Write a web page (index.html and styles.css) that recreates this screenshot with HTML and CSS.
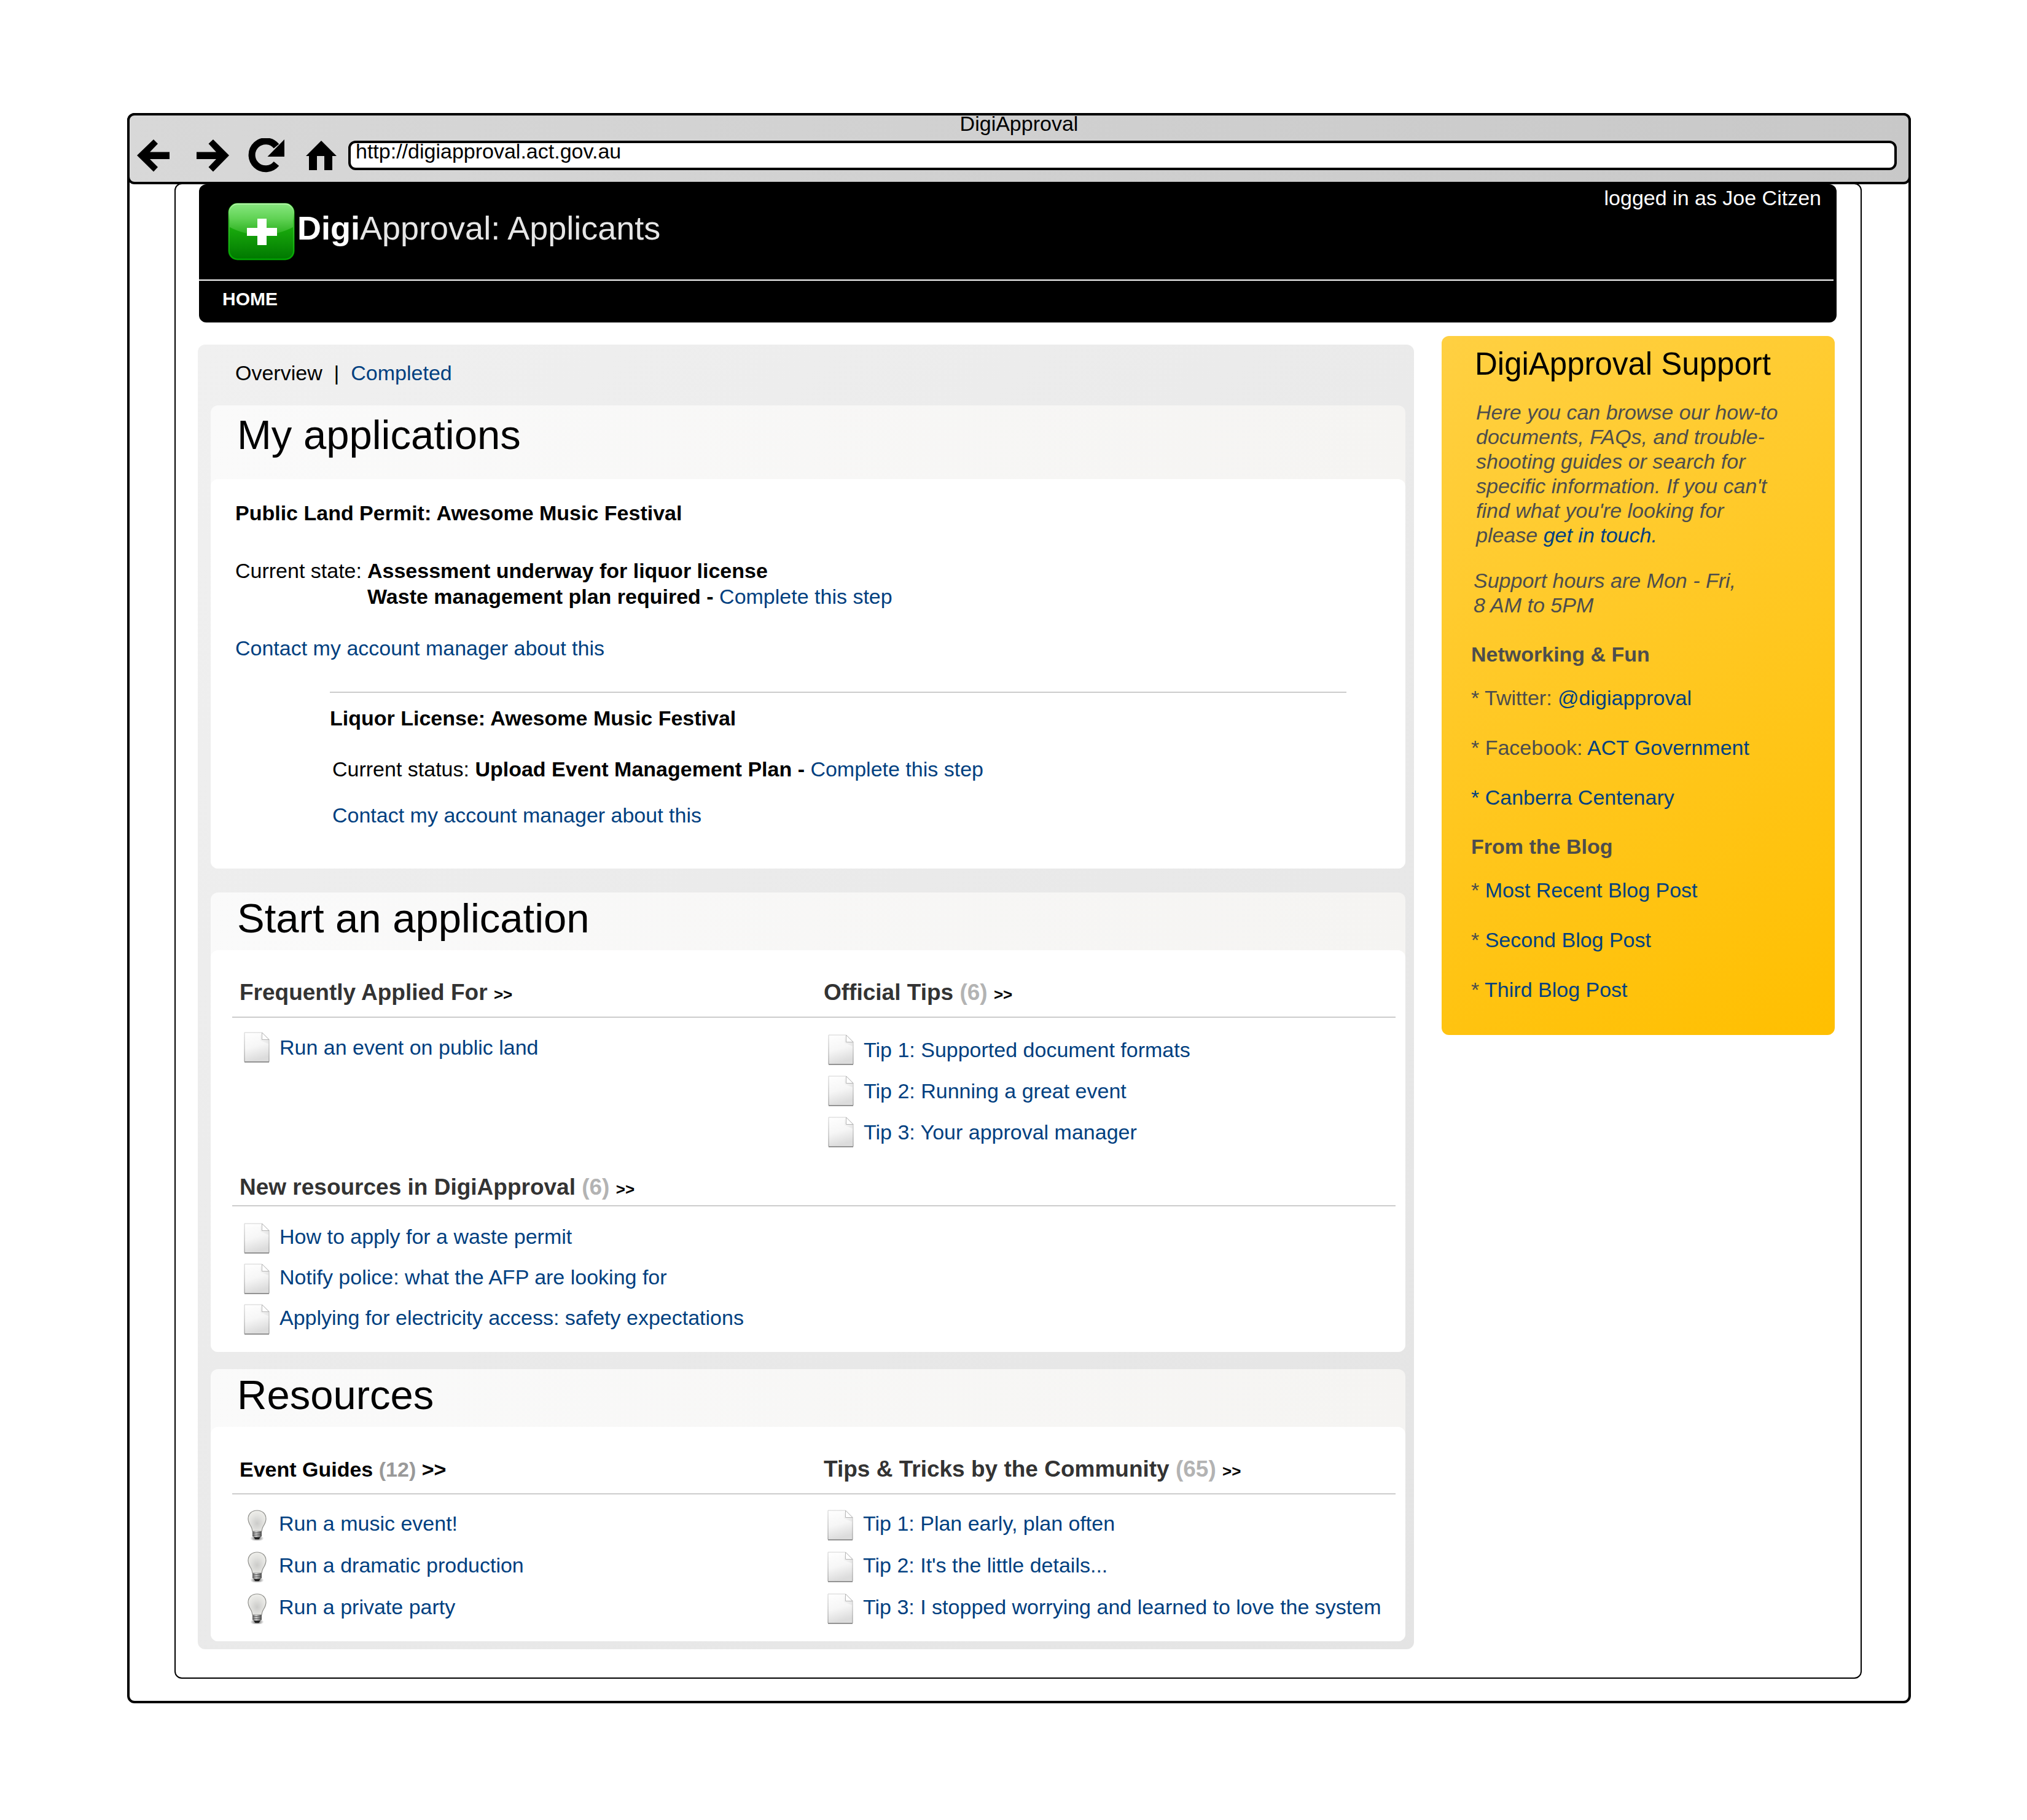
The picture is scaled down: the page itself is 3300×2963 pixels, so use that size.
FILE: index.html
```html
<!DOCTYPE html>
<html lang="en">
<head>
<meta charset="utf-8">
<title>DigiApproval</title>
<link rel="stylesheet" href="styles.css">
</head>
<body>
<svg class="defs" aria-hidden="true">
  <defs>
    <linearGradient id="paper" x1="0" y1="0" x2="0.25" y2="1">
      <stop offset="0" stop-color="#fff"/>
      <stop offset="0.55" stop-color="#f6f6f6"/>
      <stop offset="1" stop-color="#dcdcdc"/>
    </linearGradient>
    <linearGradient id="paper-edge" x1="0" y1="0" x2="0" y2="1">
      <stop offset="0" stop-color="#d2d2d2"/>
      <stop offset="1" stop-color="#8c8c8c"/>
    </linearGradient>
    <linearGradient id="fold-shade" x1="1" y1="0" x2="0" y2="1">
      <stop offset="0" stop-color="#b4b4b4"/>
      <stop offset="1" stop-color="#e8e8e8" stop-opacity="0.3"/>
    </linearGradient>
    <radialGradient id="glass" cx="0.5" cy="0.62" r="0.6">
      <stop offset="0" stop-color="#cbcbc9"/>
      <stop offset="0.6" stop-color="#e2e2df"/>
      <stop offset="1" stop-color="#eeeeea"/>
    </radialGradient>
    <linearGradient id="cap" x1="0" y1="0" x2="1" y2="0">
      <stop offset="0" stop-color="#5e5e5e"/>
      <stop offset="0.4" stop-color="#d6d6d6"/>
      <stop offset="1" stop-color="#4c4c4c"/>
    </linearGradient>
    <radialGradient id="bulb-shadow">
      <stop offset="0" stop-color="#000" stop-opacity="0.7"/>
      <stop offset="1" stop-color="#000" stop-opacity="0"/>
    </radialGradient>
    <symbol id="doc" viewBox="0 0 42 50">
      <path d="M1 1H29.500L41 12.500V48.500H1Z" fill="url(#paper)" stroke="url(#paper-edge)" stroke-width="1"/>
      <path d="M29.500 12.500H41V20L27 14V3Z" fill="url(#fold-shade)" opacity="0.5"/>
      <path d="M29.500 1V12.500H41Z" fill="#fff" stroke="#b5b5b5" stroke-width="1"/>
      <path d="M1 49H41" stroke="#858585" stroke-width="1.500"/>
    </symbol>
    <symbol id="bulb" viewBox="2 0 42 50">
      <ellipse cx="24.500" cy="46.500" rx="11" ry="5" fill="url(#bulb-shadow)"/>
      <path d="M24.500 1C16 1 10 6.500 10 14.500C10 21 13 24 15 28C16.500 31 16.500 33 17 35H32C32.500 33 32.500 31 34 28C36 24 39 21 39 14.500C39 6.500 33 1 24.500 1Z" fill="url(#glass)" stroke="#8f8f8b" stroke-width="1.200"/>
      <path d="M17 35H32V43L28.500 45.500H20.500L17 43Z" fill="url(#cap)"/>
      <path d="M17 38L32 37M17 41.500L32 40.500" stroke="#555" stroke-width="1"/>
      <path d="M19 44.500H30L27.500 48H21.500Z" fill="#1c1c1c"/>
    </symbol>
  </defs>
</svg>

<div class="browser">
  <div class="toolbar">
    <div class="window-title">DigiApproval</div>
    <div class="nav-row">
      <button class="nav-button" type="button" aria-label="Back"><svg viewBox="0 0 64 56"><path d="M5 28L32 2L39 9L26 22.500H58V34H26L39 47L32 54.500Z"/></svg></button>
      <button class="nav-button" type="button" aria-label="Forward"><svg viewBox="0 0 64 56"><path d="M63 28L37 2L29.500 9L42 22.500H10V34H42L29.500 47L37 54.500Z"/></svg></button>
      <button class="nav-button" type="button" aria-label="Reload"><svg viewBox="0 0 64 56"><path d="M48 41.500A22.500 22.500 0 1 1 48 13" fill="none" stroke="#000" stroke-width="11"/><path d="M61 2V30H33.500Z"/></svg></button>
      <button class="nav-button" type="button" aria-label="Home"><svg viewBox="0 0 64 56"><path d="M29 4L54 29H47V52H34V29H22V52H9V29H4Z"/></svg></button>
      <input class="address" type="text" aria-label="Address" value="http://digiapproval.act.gov.au">
    </div>
  </div>

  <div class="viewport">
    <header class="site-header">
      <div class="masthead">
        <div class="brand">
          <svg class="logo" viewBox="0 0 109 94" aria-hidden="true">
            <defs>
              <linearGradient id="logo-base" x1="0" y1="0" x2="0" y2="1">
                <stop offset="0" stop-color="#4cc93c"/>
                <stop offset="0.45" stop-color="#18a80c"/>
                <stop offset="1" stop-color="#007800"/>
              </linearGradient>
              <linearGradient id="logo-gloss" x1="0" y1="0" x2="0" y2="1">
                <stop offset="0" stop-color="#8ae882"/>
                <stop offset="0.5" stop-color="#60d254"/>
                <stop offset="1" stop-color="#28ae1c"/>
              </linearGradient>
              <linearGradient id="logo-edge" x1="0" y1="0" x2="0" y2="1">
                <stop offset="0" stop-color="#b4f5a8"/>
                <stop offset="0.3" stop-color="#3cc030"/>
                <stop offset="1" stop-color="#00a800"/>
              </linearGradient>
              <clipPath id="logo-clip"><rect x="2" y="2" width="105" height="90" rx="14"/></clipPath>
            </defs>
            <rect x="0.500" y="0.500" width="108" height="93" rx="15" fill="#0a8c04"/>
            <rect x="2" y="2" width="105" height="90" rx="14" fill="url(#logo-base)"/>
            <path d="M0 0H109V38Q85 52 54.500 52T0 38Z" fill="url(#logo-gloss)" clip-path="url(#logo-clip)"/>
            <rect x="2" y="2" width="105" height="90" rx="14" fill="none" stroke="url(#logo-edge)" stroke-width="2"/>
            <path d="M48 26H63V41H80V54H63V69H48V54H31V41H48Z" fill="#fff"/>
          </svg>
          <h1 class="brand-name"><strong>Digi</strong>Approval: Applicants</h1>
        </div>
        <p class="session">logged in as Joe Citzen</p>
      </div>
      <nav class="main-nav"><a href="#">HOME</a></nav>
    </header>

    <div class="columns">
      <main class="panel">
        <nav class="tabs">Overview&nbsp; |&nbsp; <a href="#">Completed</a></nav>

        <section class="card">
          <h2 class="card-title card-title--tall">My applications</h2>
          <div class="card-body applications">
            <article class="permit">
              <h3>Public Land Permit: Awesome Music Festival</h3>
              <div class="status">
                <span>Current state:</span>
                <div>
                  <p><strong>Assessment underway for liquor license</strong></p>
                  <p><strong>Waste management plan required - </strong><a href="#">Complete this step</a></p>
                </div>
              </div>
              <p><a href="#">Contact my account manager about this</a></p>
            </article>
            <article class="licence">
              <h3>Liquor License: Awesome Music Festival</h3>
              <p class="licence-line">Current status: <strong>Upload Event Management Plan - </strong><a href="#">Complete this step</a></p>
              <p class="licence-line"><a href="#">Contact my account manager about this</a></p>
            </article>
          </div>
        </section>

        <section class="card">
          <h2 class="card-title">Start an application</h2>
          <div class="card-body topics">
            <section>
              <h3 class="topic">Frequently Applied For <a class="more" href="#">&gt;&gt;</a></h3>
              <ul class="items items--first">
                <li><svg class="icon"><use href="#doc"/></svg><a href="#">Run an event on public land</a></li>
              </ul>
            </section>
            <section>
              <h3 class="topic">Official Tips <span class="count">(6)</span> <a class="more" href="#">&gt;&gt;</a></h3>
              <ul class="items">
                <li><svg class="icon"><use href="#doc"/></svg><a href="#">Tip 1: Supported document formats</a></li>
                <li><svg class="icon"><use href="#doc"/></svg><a href="#">Tip 2: Running a great event</a></li>
                <li><svg class="icon"><use href="#doc"/></svg><a href="#">Tip 3: Your approval manager</a></li>
              </ul>
            </section>
            <section class="topic-wide">
              <h3 class="topic topic--close">New resources in DigiApproval <span class="count">(6)</span> <a class="more" href="#">&gt;&gt;</a></h3>
              <ul class="items items--tight">
                <li><svg class="icon"><use href="#doc"/></svg><a href="#">How to apply for a waste permit</a></li>
                <li><svg class="icon"><use href="#doc"/></svg><a href="#">Notify police: what the AFP are looking for</a></li>
                <li><svg class="icon"><use href="#doc"/></svg><a href="#">Applying for electricity access: safety expectations</a></li>
              </ul>
            </section>
          </div>
        </section>

        <section class="card">
          <h2 class="card-title">Resources</h2>
          <div class="card-body topics">
            <section>
              <h3 class="topic topic--guides">Event Guides <span class="count">(12)</span> <a class="more" href="#">&gt;&gt;</a></h3>
              <ul class="items items--loose">
                <li><svg class="icon"><use href="#bulb"/></svg><a href="#">Run a music event!</a></li>
                <li><svg class="icon"><use href="#bulb"/></svg><a href="#">Run a dramatic production</a></li>
                <li><svg class="icon"><use href="#bulb"/></svg><a href="#">Run a private party</a></li>
              </ul>
            </section>
            <section>
              <h3 class="topic">Tips &amp; Tricks by the Community <span class="count">(65)</span> <a class="more" href="#">&gt;&gt;</a></h3>
              <ul class="items items--loose">
                <li><svg class="icon"><use href="#doc"/></svg><a href="#">Tip 1: Plan early, plan often</a></li>
                <li><svg class="icon"><use href="#doc"/></svg><a href="#">Tip 2: It's the little details...</a></li>
                <li><svg class="icon"><use href="#doc"/></svg><a href="#">Tip 3: I stopped worrying and learned to love the system</a></li>
              </ul>
            </section>
          </div>
        </section>
      </main>

      <aside class="support">
        <h2>DigiApproval Support</h2>
        <p class="intro">Here you can browse our how-to documents, FAQs, and trouble-shooting guides or search for specific information. If you can't find what you're looking for please <a href="#">get in touch.</a></p>
        <p class="hours">Support hours are Mon - Fri,<br>8 AM to 5PM</p>
        <h3>Networking &amp; Fun</h3>
        <ul>
          <li>* Twitter: <a href="#">@digiapproval</a></li>
          <li>* Facebook: <a href="#">ACT Government</a></li>
          <li><a href="#">* Canberra Centenary</a></li>
        </ul>
        <h3>From the Blog</h3>
        <ul>
          <li>* <a href="#">Most Recent Blog Post</a></li>
          <li>* <a href="#">Second Blog Post</a></li>
          <li>* <a href="#">Third Blog Post</a></li>
        </ul>
      </aside>
    </div>
  </div>
</div>
</body>
</html>
```
FILE: styles.css
```css
* {
  box-sizing: border-box;
}

body {
  margin: 0;
  background: #fff;
  color: #000;
  font-family: "Liberation Sans", Arial, sans-serif;
  font-size: 34px;
  line-height: 42px;
}

h1, h2, h3, p, ul {
  margin: 0;
  padding: 0;
}

ul {
  list-style: none;
}

a {
  color: #004080;
  text-decoration: none;
}

.defs {
  display: block;
  width: 0;
  height: 0;
}

/* Browser window */

.browser {
  margin: 184px 189px 192px 207px;
  border: 4px solid #000;
  border-radius: 12px;
}

.toolbar {
  margin: -4px -4px 0;
  border: 4px solid #000;
  border-radius: 12px;
  background: linear-gradient(100deg, #d8d8d8, #c8c8c8);
}

.window-title {
  line-height: 26px;
  text-align: center;
}

.nav-row {
  display: flex;
  align-items: center;
  gap: 28px;
  padding: 11px 19px 15px 7px;
}

.nav-button {
  flex: none;
  width: 64px;
  height: 56px;
  padding: 0;
  border: 0;
  background: none;
}

.nav-button svg {
  display: block;
  width: 64px;
  height: 56px;
}

.address {
  flex: 1;
  min-width: 0;
  height: 48px;
  margin-left: -19px;
  padding: 0 8px 14px;
  border: 4px solid #000;
  border-radius: 12px;
  background: #fff;
  color: #000;
  font: inherit;
  line-height: 26px;
}

.viewport {
  margin: -2px 76px 36px 73px;
  padding: 0 39px 46px 36px;
  border: 2px solid #000;
  border-radius: 12px;
}

/* Site header */

.site-header {
  margin-left: 2px;
  padding-right: 5px;
  border-radius: 12px;
  background: #000;
  color: #fff;
}

.masthead {
  display: flex;
  justify-content: space-between;
  align-items: flex-start;
  border-bottom: 2px solid #fff;
}

.brand {
  display: flex;
  align-items: center;
  gap: 4px;
  padding: 30px 0 31px 47px;
}

.logo {
  flex: none;
  width: 109px;
  height: 94px;
}

.brand-name {
  padding-bottom: 12px;
  color: #e6e6e6;
  font-size: 54px;
  font-weight: 400;
  line-height: 60px;
}

.brand-name strong {
  color: #fff;
}

.session {
  padding: 1px 20px 0 0;
}

.main-nav {
  display: flex;
  padding: 9px 38px 17px;
}

.main-nav a {
  color: #fff;
  font-size: 30px;
  font-weight: 700;
}

/* Page columns */

.columns {
  display: flex;
  align-items: flex-start;
  gap: 45px;
  padding: 22px 3px 0 0;
}

.panel {
  flex: 1;
  min-width: 0;
  margin-top: 14px;
  padding: 25px 14px 13px 21px;
  border-radius: 12px;
  background: linear-gradient(135deg, #f0f0f0, #e4e4e4);
}

.tabs {
  padding: 0 40px 32px;
}

.card {
  border-radius: 12px;
  background: linear-gradient(90deg, #fafafa, #f5f4f2);
}

.card + .card {
  margin-top: 28px;
}

.card:nth-of-type(2) {
  margin-top: 39px;
}

.card-title {
  padding: 4px 43px 14px;
  font-size: 67px;
  font-weight: 400;
  line-height: 76px;
}

.card-title--tall {
  padding-top: 10px;
  padding-bottom: 34px;
}

.card-body {
  border-radius: 12px;
  background: #fff;
}

/* My applications */

.applications {
  padding: 34px 96px 66px 40px;
}

.applications h3 {
  font-size: 34px;
}

.status {
  display: flex;
  gap: 9px;
  padding: 52px 0 42px;
}

.licence {
  margin: 50px 0 0 154px;
  padding-top: 20px;
  border-top: 2px solid #ccc;
}

.licence-line {
  padding: 41px 0 0 4px;
}

.licence-line + .licence-line {
  padding-top: 33px;
}

/* Topic lists */

.topics {
  display: grid;
  grid-template-columns: 951fr 943fr;
  padding: 48px 16px 28px 35px;
}

.topic-wide {
  grid-column: 1 / -1;
  padding-top: 44px;
}

.topic {
  padding: 0 12px 18px;
  border-bottom: 2px solid #ccc;
  color: #333;
  font-size: 37px;
}

.topic--close {
  padding-bottom: 8px;
}

.count {
  color: #b3b3b3;
}

.more {
  color: #000;
  font-size: 26px;
  line-height: 26px;
}

.topic--guides {
  color: #000;
  font-size: 34px;
}

.topic--guides .count {
  color: #999;
}

.topic--guides .more {
  font-size: 34px;
}

.items {
  display: flex;
  flex-direction: column;
  gap: 17px;
  padding: 27px 19px 0;
  line-height: 50px;
}

.items--first {
  padding-top: 23px;
}

.items--tight {
  gap: 16px;
  line-height: 44px;
}

.items--loose {
  gap: 18px;
  padding: 25px 18px 0;
  line-height: 44px;
}

.items li {
  display: flex;
  align-items: flex-start;
  gap: 16px;
}

.icon {
  flex: none;
  width: 42px;
  height: 50px;
}

/* Support sidebar */

.support {
  flex: none;
  width: 640px;
  padding: 16px 48px 54px;
  border-radius: 12px;
  background: linear-gradient(150deg, #ffd042, #ffbf00);
  color: #4d4d4d;
  line-height: 40px;
}

.support h2 {
  padding-left: 6px;
  color: #000;
  font-size: 51px;
  font-weight: 400;
  line-height: 60px;
}

.support h3 {
  margin-top: 40px;
  font-size: 34px;
}

.intro,
.hours {
  font-style: italic;
}

.intro {
  padding: 28px 38px 0 8px;
}

.hours {
  padding: 34px 0 0 4px;
}

.support ul {
  display: flex;
  flex-direction: column;
  gap: 41px;
  padding-top: 31px;
}
```
